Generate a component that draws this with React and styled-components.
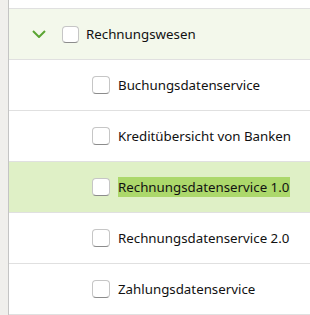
import React from 'react'
import styled, { createGlobalStyle } from 'styled-components'

const Global = createGlobalStyle`
body {
  margin: 0;
  background: #fff;
  font-family: "Noto Sans", "Open Sans", sans-serif;
}
`
const Page = styled.div`
display: flex;
width: 310px;
height: 315px;
overflow: hidden;
`
const Side = styled.div`
width: 8px;
flex: 0 0 8px;
background-color: #f0efec;
border-right: 1px solid #c4c4c4;
`
const Tree = styled.div`
flex: 1;
padding-top: 8px;
`
const List = styled.div`
border-top: 1px solid #e0e0e0;
`
const Row = styled.div`
display: flex;
align-items: center;
height: 50px;
border-bottom: 1px solid #e0e0e0;
padding-left: ${p => p.indent}px;
background-color: ${p => p.bg || '#fff'};
`
const Chevron = styled.svg`
width: 14px;
height: 8px;
margin-right: 16px;
`
const Box = styled.span`
box-sizing: border-box;
width: ${p => p.size}px;
height: ${p => p.size}px;
background-color: #fff;
border: 1px solid #c6c6c6;
border-bottom-color: #8c8c8c;
border-radius: 4px;
margin-right: ${p => p.gap}px;
flex: 0 0 auto;
`
const Label = styled.span`
font-size: 13.3px;
color: #111;
line-height: 20px;
padding-right: 1px;
background-color: ${p => p.marked ? '#acd86b' : 'transparent'};
`

const children = [
  'Buchungsdatenservice',
  'Kreditübersicht von Banken',
  'Rechnungsdatenservice 1.0',
  'Rechnungsdatenservice 2.0',
  'Zahlungsdatenservice',
]

export default function App() {
  return (
    <Page>
      <Global />
      <Side />
      <Tree>
        <List>
          <Row indent={23} bg="#f3f8eb">
            <Chevron viewBox="0 0 14 8">
              <polyline points="1,1 7,7 13,1" fill="none" stroke="#5aa532" strokeWidth="2" />
            </Chevron>
            <Box size={17} gap={7} />
            <Label>Rechnungswesen</Label>
          </Row>
          {children.map(name => {
            const sel = name === 'Rechnungsdatenservice 1.0'
            return (
              <Row key={name} indent={83} bg={sel ? '#dff0c6' : '#fff'}>
                <Box size={18} gap={8} />
                <Label marked={sel}>{name}</Label>
              </Row>
            )
          })}
        </List>
      </Tree>
    </Page>
  )
}
